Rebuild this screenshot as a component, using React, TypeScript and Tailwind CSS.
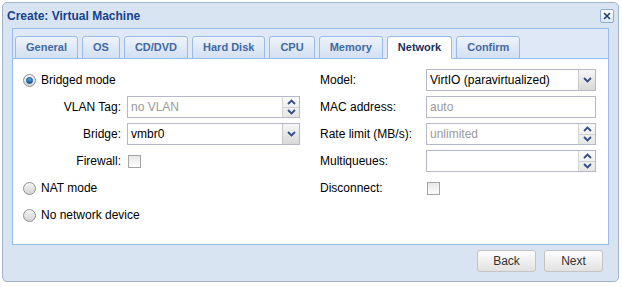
import React from 'react';

const tabs = ['General', 'OS', 'CD/DVD', 'Hard Disk', 'CPU', 'Memory', 'Network', 'Confirm'];

const Chevron = ({up}: {up?: boolean}) => (
    <svg width="9" height="6" viewBox="0 0 9 6">
        <polyline
            points={up ? '1,5 4.5,1.5 8,5' : '1,1 4.5,4.5 8,1'}
            fill="none"
            stroke="#2f4f85"
            strokeWidth="1.8"
        />
    </svg>
);

const Radio = ({checked}: {checked?: boolean}) => (
    <span className="w-[13px] h-[13px] rounded-full border border-[#8f8f8f] bg-gradient-to-b from-[#f4f4f4] to-[#d4d4d4] flex items-center justify-center shrink-0">
        {checked && <span className="w-[7px] h-[7px] rounded-full bg-gradient-to-b from-[#5fb0e8] to-[#0f5e9e] border border-[#0b4f87]"/>}
    </span>
);

const Checkbox = () => (
    <span className="w-[13px] h-[13px] border border-[#a5a5a5] bg-gradient-to-b from-[#e8e8e8] to-[#fcfcfc] shrink-0"/>
);

const Field = ({value, muted, kind}: {value?: string; muted?: boolean; kind?: 'spin' | 'combo'}) => (
    <div className="flex-1 h-[22px] border border-[#b5b8c8] bg-white flex">
        <div className={`flex-1 pl-[3px] flex items-center text-[12px] ${muted ? 'text-[#9a9a9a]' : 'text-black'}`}>
            {value}
        </div>
        {kind === 'spin' && (
            <div className="w-[17px] flex flex-col border-l border-[#d4d4d4] bg-gradient-to-b from-[#fafafa] to-[#e6e6e6]">
                <div className="flex-1 flex items-center justify-center border-b border-[#d0d0d0]"><Chevron up/></div>
                <div className="flex-1 flex items-center justify-center"><Chevron/></div>
            </div>
        )}
        {kind === 'combo' && (
            <div className="w-[17px] flex items-center justify-center border-l border-[#c8c8c8] bg-gradient-to-b from-[#f6f6f6] to-[#d9d9d9]">
                <Chevron/>
            </div>
        )}
    </div>
);

function App() {
    return (
        <div className="w-[622px] h-[287px] bg-white pt-[2px] pl-[2px]"
             style={{fontFamily: '"Liberation Sans", Arial, sans-serif'}}>
            <div className="w-[617px] h-[280px] rounded-[5px] border border-[#a3b3c7] bg-[#d9e4f2] flex flex-col">
                {/* Header */}
                <div className="h-[25px] flex items-center justify-between pl-[4px] pr-[4px]">
                    <span className="text-[12px] font-bold text-[#15428b]">Create: Virtual Machine</span>
                    <span className="w-[14px] h-[14px] rounded-[2px] border border-[#8eaad4] bg-gradient-to-b from-[#ffffff] to-[#dde7f4] flex items-center justify-center">
                        <svg width="8" height="8" viewBox="0 0 8 8">
                            <path d="M1 1 L7 7 M7 1 L1 7" stroke="#1c3d73" strokeWidth="1.6"/>
                        </svg>
                    </span>
                </div>

                {/* Tab panel */}
                <div className="mx-[9px] border border-[#99bbe8] flex flex-col">
                    <div className="bg-[#dfe8f6] pt-[7px] pl-[2px] flex gap-[4px] border-b border-[#99bbe8]">
                        {tabs.map(tab => (
                            <div
                                key={tab}
                                className={`h-[23px] -mb-px px-[10px] flex items-center rounded-t-[3px] border border-[#99bbe8] text-[11px] font-bold ${
                                    tab === 'Network'
                                        ? 'bg-white border-b-white text-[#15325f]'
                                        : 'bg-gradient-to-b from-[#eef3fa] to-[#d2e0f2] text-[#416aa3]'
                                }`}
                            >
                                {tab}
                            </div>
                        ))}
                    </div>

                    <div className="h-[185px] bg-white flex pt-[10px] pl-[10px] pr-[12px] text-[12px] text-black">
                        {/* Left column */}
                        <div className="w-[287px] flex flex-col gap-[5px]">
                            <div className="h-[22px] flex items-center gap-[5px]"><Radio checked/>Bridged mode</div>
                            <div className="h-[22px] flex items-center">
                                <span className="w-[98px] text-right mr-[6px]">VLAN Tag:</span>
                                <div className="w-[173px] flex"><Field value="no VLAN" muted kind="spin"/></div>
                            </div>
                            <div className="h-[22px] flex items-center">
                                <span className="w-[98px] text-right mr-[6px]">Bridge:</span>
                                <div className="w-[173px] flex"><Field value="vmbr0" kind="combo"/></div>
                            </div>
                            <div className="h-[22px] flex items-center">
                                <span className="w-[98px] text-right mr-[7px]">Firewall:</span>
                                <Checkbox/>
                            </div>
                            <div className="h-[22px] flex items-center gap-[5px]"><Radio/>NAT mode</div>
                            <div className="h-[22px] flex items-center gap-[5px]"><Radio/>No network device</div>
                        </div>

                        {/* Right column */}
                        <div className="flex-1 ml-[10px] flex flex-col gap-[5px]">
                            <div className="h-[22px] flex items-center">
                                <span className="w-[106px]">Model:</span>
                                <Field value="VirtIO (paravirtualized)" kind="combo"/>
                            </div>
                            <div className="h-[22px] flex items-center">
                                <span className="w-[106px]">MAC address:</span>
                                <Field value="auto" muted/>
                            </div>
                            <div className="h-[22px] flex items-center">
                                <span className="w-[106px]">Rate limit (MB/s):</span>
                                <Field value="unlimited" muted kind="spin"/>
                            </div>
                            <div className="h-[22px] flex items-center">
                                <span className="w-[106px]">Multiqueues:</span>
                                <Field kind="spin"/>
                            </div>
                            <div className="h-[22px] flex items-center">
                                <span className="w-[107px]">Disconnect:</span>
                                <Checkbox/>
                            </div>
                        </div>
                    </div>
                </div>

                {/* Footer */}
                <div className="flex justify-end gap-[8px] pt-[5px] pr-[15px]">
                    {['Back', 'Next'].map(label => (
                        <button
                            key={label}
                            className="w-[59px] h-[22px] rounded-[3px] border border-[#c4c4c4] bg-gradient-to-b from-[#fdfdfd] to-[#e2e2e2] text-[12px] text-[#333]"
                        >
                            {label}
                        </button>
                    ))}
                </div>
            </div>
        </div>
    );
}

export default App;
